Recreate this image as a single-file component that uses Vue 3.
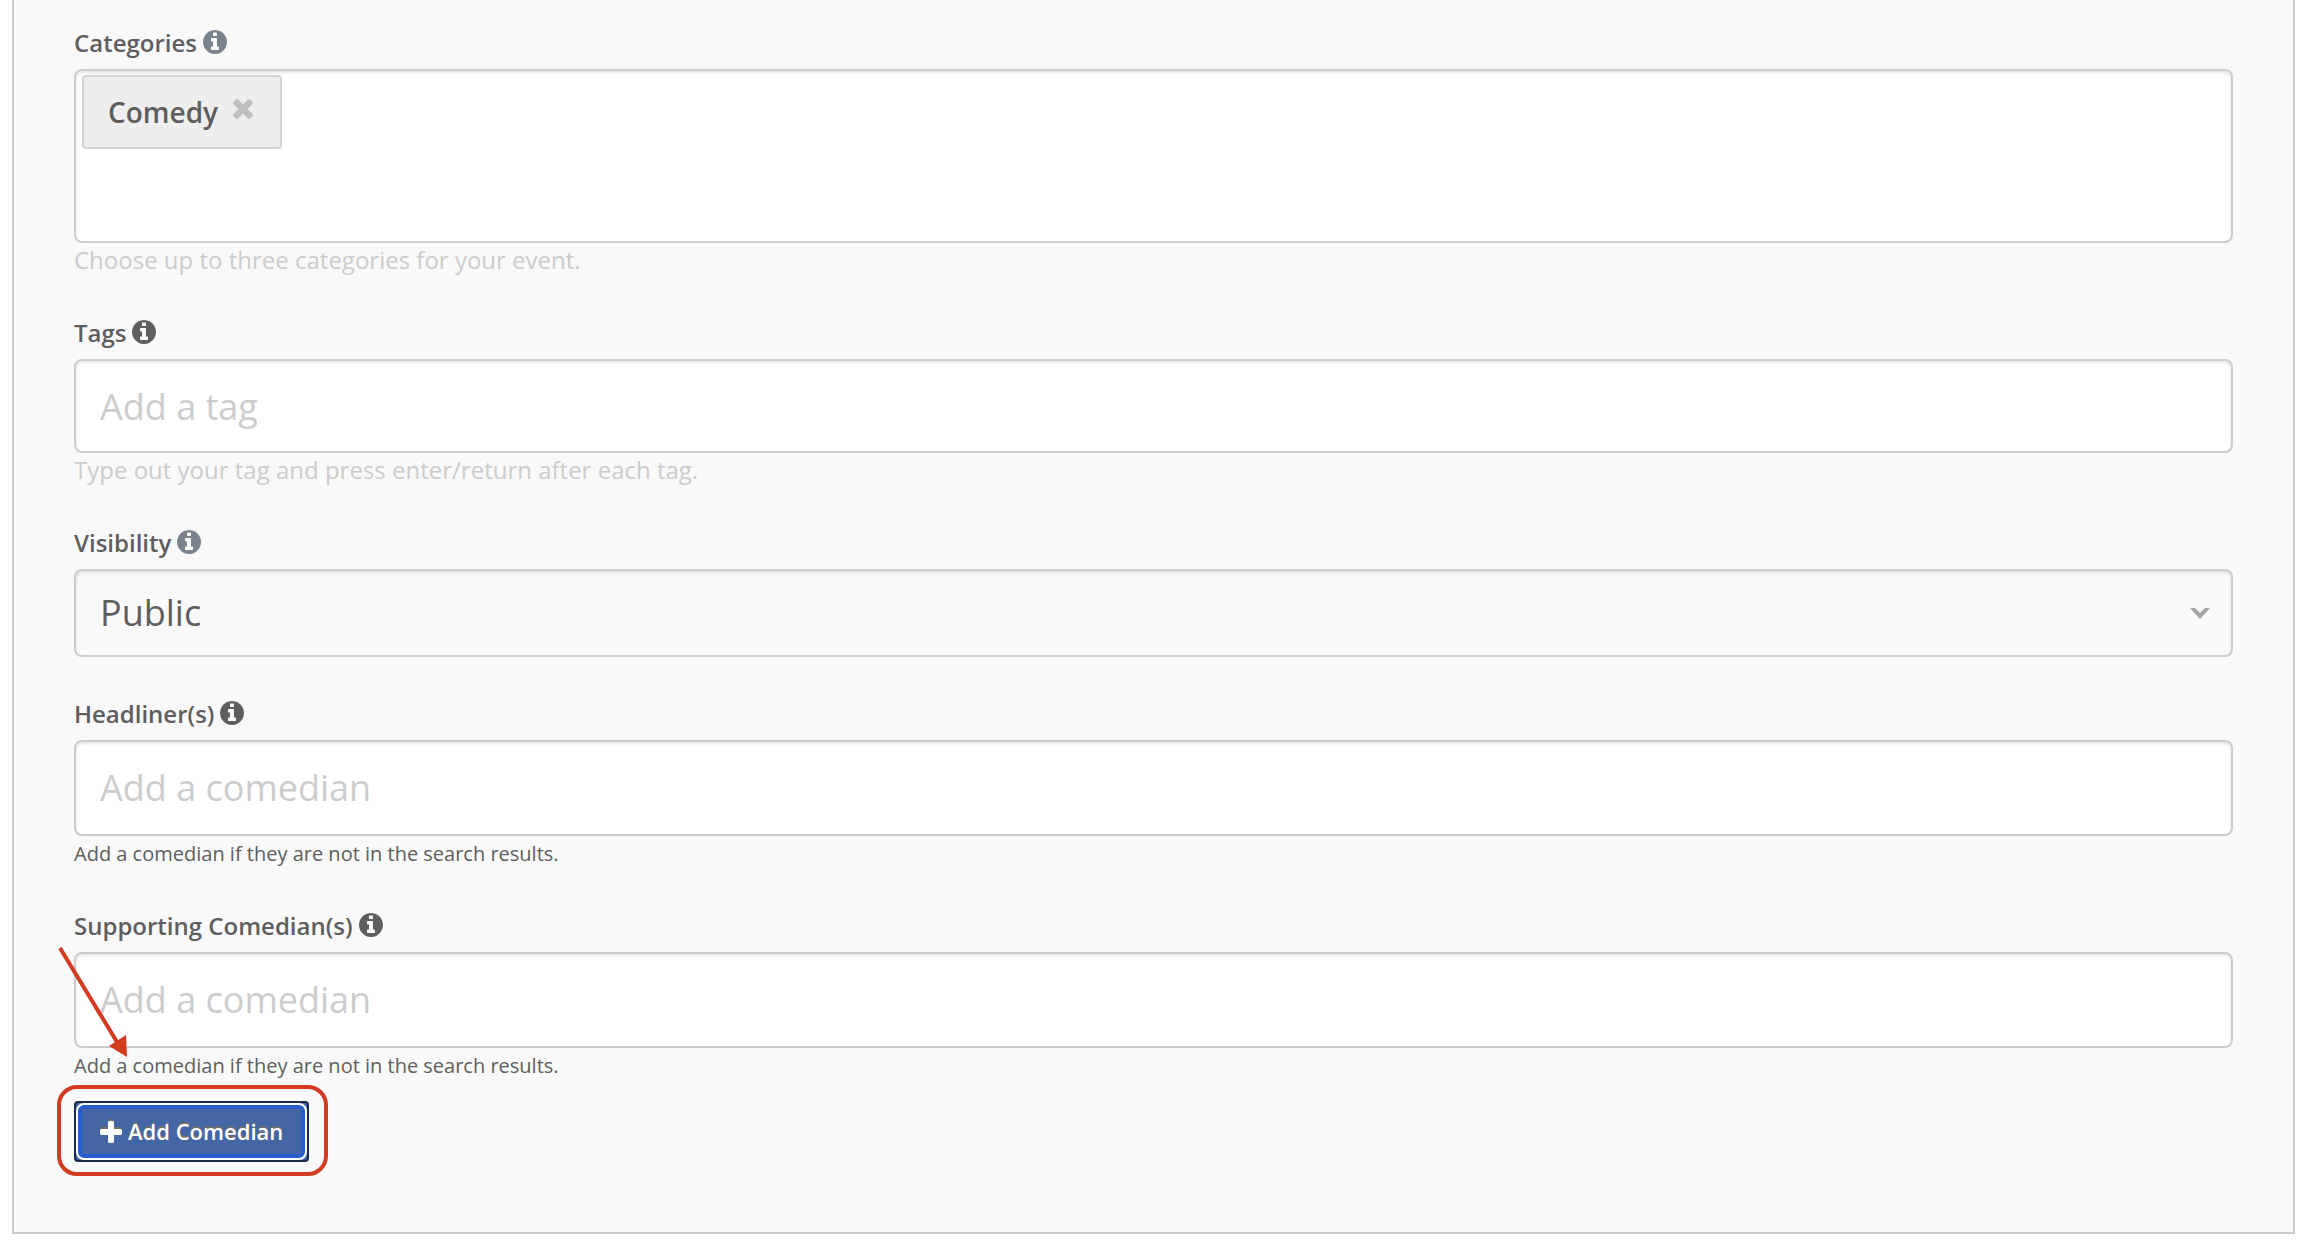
<template>
  <form class="panel" @submit.prevent>
    <div class="field">
      <div class="label-row">
        <label for="categories">Categories</label>
        <a class="info-link" href="#" aria-label="About categories">
          <svg class="info" viewBox="128 128 1536 1536"><path :d="icons.info" /></svg>
        </a>
      </div>
      <div class="control chips">
        <span v-for="(item, index) in categories" :key="item" class="chip">
          {{ item }}
          <button type="button" class="chip-remove" :aria-label="'Remove ' + item" @click="removeCategory(index)">
            <svg viewBox="302 366 1188 1188"><path :d="icons.times" /></svg>
          </button>
        </span>
        <input id="categories" class="chip-input" type="text">
      </div>
      <p class="help muted">Choose up to three categories for your event.</p>
    </div>

    <div class="field">
      <div class="label-row">
        <label for="tags">Tags</label>
        <svg class="info" viewBox="128 128 1536 1536"><path :d="icons.info" /></svg>
      </div>
      <input id="tags" v-model="tag" class="control text tag-input" type="text" placeholder="Add a tag">
      <p class="help muted">Type out your tag and press enter/return after each tag.</p>
    </div>

    <div class="field field-select">
      <div class="label-row">
        <label for="visibility">Visibility</label>
        <a class="info-link" href="#" aria-label="About visibility">
          <svg class="info" viewBox="128 128 1536 1536"><path :d="icons.info" /></svg>
        </a>
      </div>
      <div class="select-wrap">
        <select id="visibility" v-model="visibility" class="control">
          <option>Public</option>
          <option>Private</option>
        </select>
        <svg class="chevron" viewBox="0 0 20 11"><path d="M0 0h5l5 5 5-5h5L10 11z" /></svg>
      </div>
    </div>

    <div v-for="field in comedianFields" :key="field.id" class="field">
      <div class="label-row">
        <label :for="field.id">{{ field.label }}</label>
        <svg class="info" viewBox="128 128 1536 1536"><path :d="icons.info" /></svg>
      </div>
      <input :id="field.id" v-model="field.value" class="control text" type="text" placeholder="Add a comedian">
      <p class="help small">Add a comedian if they are not in the search results.</p>
    </div>

    <div class="add-wrap">
      <button type="button" class="add-button">
        <svg class="plus" viewBox="192 128 1408 1408"><path :d="icons.plus" /></svg>
        <span>Add Comedian</span>
      </button>
      <svg class="pointer" viewBox="0 0 74 116">
        <path class="pointer-line" d="M4 4L61 98" />
        <path class="pointer-head" d="M71 113L53 102L70 91z" />
      </svg>
    </div>
  </form>
</template>

<script setup>
import { reactive, ref } from 'vue'

const categories = ref(['Comedy'])
const tag = ref('')
const visibility = ref('Public')

const comedianFields = reactive([
  { id: 'headliners', label: 'Headliner(s)', value: '' },
  { id: 'supporting', label: 'Supporting Comedian(s)', value: '' },
])

const icons = {
  info: 'M1152 1376v-160q0-14-9-23t-23-9h-96v-512q0-14-9-23t-23-9h-320q-14 0-23 9t-9 23v160q0 14 9 23t23 9h96v320h-96q-14 0-23 9t-9 23v160q0 14 9 23t23 9h448q14 0 23-9t9-23zm-128-896v-160q0-14-9-23t-23-9h-192q-14 0-23 9t-9 23v160q0 14 9 23t23 9h192q14 0 23-9t9-23zm640 416q0 209-103 385.5t-279.5 279.5-385.5 103-385.5-103-279.5-279.5-103-385.5 103-385.5 279.5-279.5 385.5-103 385.5 103 279.5 279.5 103 385.5z',
  times: 'M1490 1322q0 40-28 68l-136 136q-28 28-68 28t-68-28l-294-294-294 294q-28 28-68 28t-68-28l-136-136q-28-28-28-68t28-68l294-294-294-294q-28-28-28-68t28-68l136-136q28-28 68-28t68 28l294 294 294-294q28-28 68-28t68 28l136 136q28 28 28 68t-28 68l-294 294 294 294q28 28 28 68z',
  plus: 'M1600 736v192q0 40-28 68t-68 28h-416v416q0 40-28 68t-68 28h-192q-40 0-68-28t-28-68v-416h-416q-40 0-68-28t-28-68v-192q0-40 28-68t68-28h416v-416q0-40 28-68t68-28h192q40 0 68 28t28 68v416h416q40 0 68 28t28 68z',
}

function removeCategory(index) {
  categories.value.splice(index, 1)
}
</script>

<style>
body {
  margin: 0;
  background: #fff;
}
</style>

<style scoped>
.panel {
  margin: 0 15px 0 12px;
  padding: 25px 60px 70px;
  border: 2px solid #ccc;
  border-top: none;
  background: #f9f9f9;
  color: #5e5e5e;
  font-family: "Open Sans", sans-serif;
  font-size: 24px;
  line-height: 36px;
}

.panel * {
  box-sizing: border-box;
}

.field {
  margin-bottom: 36px;
}

.field-select {
  margin-bottom: 39px;
}

.label-row {
  display: flex;
  align-items: center;
  gap: 6px;
  margin-bottom: 8px;
  font-weight: 600;
}

.info-link {
  display: flex;
  color: #7a828e;
}

.info {
  display: block;
  width: 24px;
  height: 24px;
  margin-bottom: 2px;
  fill: currentColor;
}

.control {
  display: block;
  width: 100%;
  border: 2px solid #ccc;
  border-radius: 8px;
  background-color: #fff;
  box-shadow: inset 0 2px 3px rgba(0, 0, 0, 0.1);
  color: inherit;
  font-family: inherit;
  font-size: 36px;
}

.text {
  height: 96px;
  padding: 0 24px 2px;
}

.tag-input {
  height: 94px;
  padding-bottom: 0;
}

.text::placeholder {
  color: #ccc;
  opacity: 1;
}

.chips {
  display: flex;
  flex-wrap: wrap;
  align-items: flex-start;
  gap: 6px;
  min-height: 174px;
  padding: 4px 6px;
}

.chip {
  display: flex;
  align-items: center;
  gap: 15px;
  height: 74px;
  padding: 0 27px 0 24px;
  border: 2px solid #d3d3d3;
  border-radius: 4px;
  background: #eee;
  font-size: 28px;
  font-weight: 600;
}

.chip-remove {
  width: 20px;
  height: 20px;
  margin-bottom: 6px;
  padding: 0;
  border: none;
  background: none;
  color: #bfbfbf;
  cursor: pointer;
}

.chip-remove svg {
  display: block;
  fill: currentColor;
}

.chip-input {
  flex: 1;
  height: 74px;
  padding: 0 24px;
  border: none;
  outline: none;
  background: transparent;
  color: inherit;
  font: inherit;
}

.help {
  margin: 0;
}

.muted {
  padding-bottom: 2px;
  color: #ccc;
  line-height: 34px;
}

.small {
  font-size: 20px;
}

.select-wrap {
  display: grid;
  align-items: center;
}

.select-wrap > * {
  grid-area: 1 / 1;
}

.select-wrap select {
  height: 88px;
  padding: 0 60px 2px 24px;
  background-color: #f9f9f9;
  appearance: none;
}

.chevron {
  justify-self: end;
  width: 20px;
  height: 11px;
  margin-right: 23px;
  fill: #a3a3a3;
  pointer-events: none;
}

.add-wrap {
  position: relative;
  width: fit-content;
  margin-top: -19px;
}

/* red callout frame around the button */
.add-wrap::after {
  content: "";
  position: absolute;
  inset: -16px -19px -14px -17px;
  border: 4px solid #d23b20;
  border-radius: 20px;
  pointer-events: none;
}

.add-button {
  position: relative;
  display: flex;
  align-items: center;
  gap: 6px;
  height: 61px;
  padding: 0 24px 2px;
  border: 2px solid #1b2b4b;
  border-radius: 4px;
  background: #4566a5;
  color: #fff;
  font-family: inherit;
  font-size: 22px;
  font-weight: 600;
  text-shadow: 0 -2px 0 #6f6f6f;
  cursor: pointer;
}

/* focus ring drawn inside the border */
.add-button::after {
  content: "";
  position: absolute;
  inset: 0;
  border: 2px solid #fff;
  border-radius: 8px;
  box-shadow: inset 0 0 0 4px #265fcc;
}

.plus {
  width: 22px;
  height: 22px;
  margin-top: 3px;
  fill: #fff;
  filter: drop-shadow(0 -2px 0 #6f6f6f);
}

.pointer {
  position: absolute;
  top: -157px;
  left: -18px;
  width: 74px;
  height: 116px;
  pointer-events: none;
}

.pointer-line {
  fill: none;
  stroke: #d23b20;
  stroke-width: 4;
}

.pointer-head {
  fill: #d23b20;
}
</style>
